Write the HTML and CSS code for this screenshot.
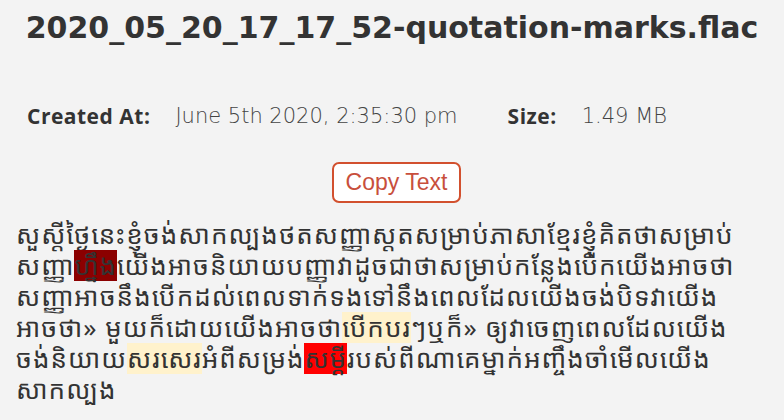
FILE: index.html
```html
<!DOCTYPE html>
<html lang="km">
<head>
<meta charset="utf-8">
<title>2020_05_20_17_17_52-quotation-marks.flac</title>
<link rel="stylesheet" href="styles.css">
</head>
<body>
<main class="page">
  <h1 class="title">2020_05_20_17_17_52-quotation-marks.flac</h1>
  <div class="meta">
    <div class="meta-item">
      <span class="meta-label">Created At:</span>
      <span class="meta-value">June 5th 2020, 2:35:30 pm</span>
    </div>
    <div class="meta-item">
      <span class="meta-label">Size:</span>
      <span class="meta-value">1.49 MB</span>
    </div>
  </div>
  <div class="actions">
    <button class="copy-btn" type="button">Copy Text</button>
  </div>
  <p class="transcript">សួស្តីថ្ងៃនេះខ្ញុំចង់សាកល្បងថតសញ្ញាស្តតសម្រាប់ភាសាខ្មែរខ្ញុំគិតថាសម្រាប់<br>សញ្ញា<mark class="hl-dark">ហ្នឹង</mark>យើងអាចនិយាយបញ្ញាវាដូចជាថាសម្រាប់កន្លែងបើកយើងអាចថា<br>សញ្ញាអាចនឹងបើកដល់ពេលទាក់ទងទៅនឹងពេលដែលយើងចង់បិទវាយើង<br>អាចថា» មួយក៏ដោយយើងអាចថា<mark class="hl-soft">បើកបរ</mark>ៗឬក៏» ឲ្យវាចេញពេលដែលយើង<br>ចង់និយាយ<mark class="hl-soft">សរសេរ</mark>អំពីសម្រង់<mark class="hl-red">សម្ដី</mark>របស់ពីណាគេម្នាក់អញ្ចឹងចាំមើលយើង<br>សាកល្បង</p>
</main>
</body>
</html>
```
FILE: styles.css
```css
html, body {
  margin: 0;
  padding: 0;
  background: #f3f3f3;
}

.page {
  display: flex;
  flex-direction: column;
  padding: 0 16px;
  color: #333;
  font-family: "DejaVu Sans", "Open Sans", sans-serif;
}

.title {
  margin: 8px 0 0;
  text-align: center;
  font-size: 30px;
  line-height: 40px;
  font-weight: 700;
  color: #333;
}

.meta {
  display: flex;
  gap: 50px;
  margin-top: 54px;
  padding-left: 11px;
  font-size: 21px;
  line-height: 28px;
}

.meta-item {
  display: flex;
  gap: 25px;
}

.meta-label {
  font-family: "Open Sans", sans-serif;
  font-weight: 700;
  letter-spacing: 0.5px;
  color: #333;
}

.meta-value {
  font-family: "DejaVu Sans", sans-serif;
  font-weight: 200;
  color: #444;
}

.actions {
  display: flex;
  justify-content: center;
  margin-top: 32px;
}

.copy-btn {
  margin-left: 9px;
  padding: 5px 12px;
  height: 41px;
  border: 2px solid #d2502e;
  border-radius: 7px;
  background: #fff;
  color: #c84f3c;
  font-family: "Liberation Sans", Arial, sans-serif;
  font-size: 23px;
  line-height: 27px;
}

.transcript {
  margin: 16px 0 0;
  font-family: "Noto Sans Khmer", "Khmer OS", "Khmer OS System", sans-serif;
  font-size: 26px;
  letter-spacing: 1px;
  line-height: 31px;
  color: #333;
}

mark {
  display: inline-block;
  line-height: 31px;
  color: inherit;
}

.hl-dark {
  background: #8b0000;
}

.hl-soft {
  background: #fff2cc;
}

.hl-red {
  background: #ff0000;
}
```
